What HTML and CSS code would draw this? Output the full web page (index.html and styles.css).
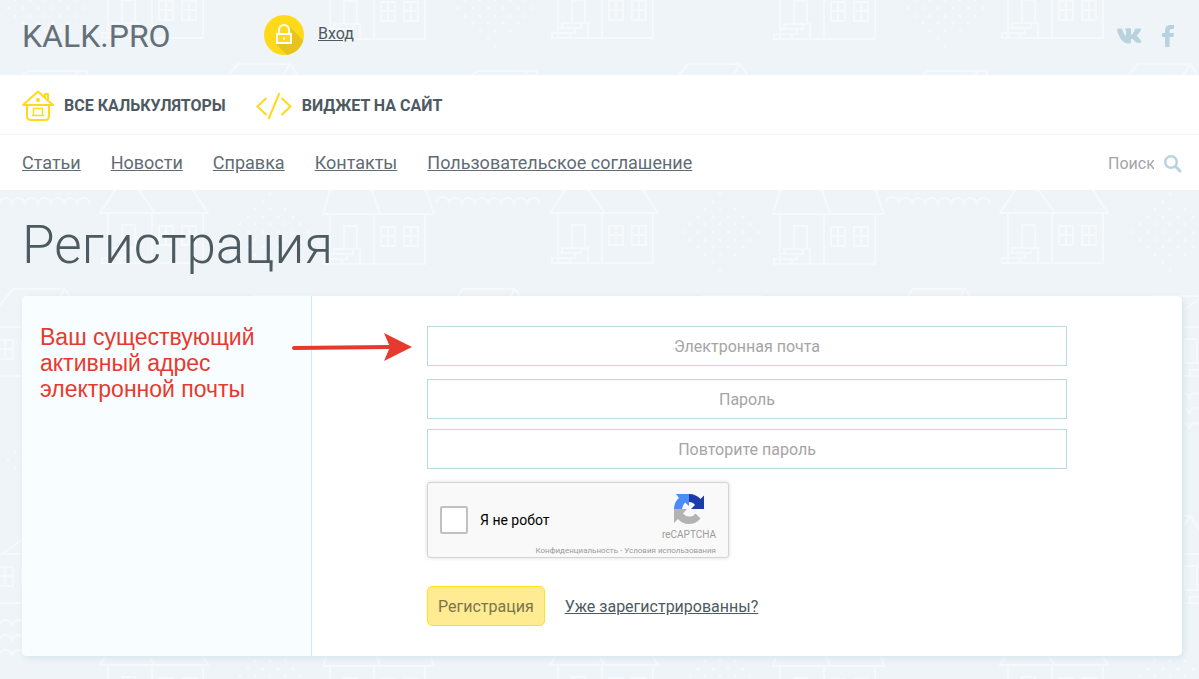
FILE: index.html
```html
<!DOCTYPE html>
<html lang="ru">
<head>
<meta charset="utf-8">
<meta name="viewport" content="width=device-width, initial-scale=1">
<title>Регистрация — KALK.PRO</title>
<link rel="stylesheet" href="styles.css">
</head>
<body>
<svg class="backdrop" aria-hidden="true">
  <defs>
    <g id="windows">
      <path d="M1 1h14v19H1zM8 1v19M1 10h14M24 1h14v19H24zM31 1v19M24 10h14"/>
    </g>
    <g id="stairs">
      <path d="M0 10h18v5H0zM6 5h17v5H6zM10 0h19v5H10zM29 0h7v15H18"/>
    </g>
    <g id="walls">
      <path d="M6 1v49h95V1M50 1v49M20 36V12h13v24M1 50h100"/>
      <use href="#windows" x="56" y="12"/>
      <use href="#stairs" x="0" y="35"/>
    </g>
    <g id="house-a">
      <path d="M-2 0h108l-24-36H22zM22-36h5L53 0"/>
      <use href="#walls"/>
    </g>
    <g id="house-b">
      <path d="M-1 0h111l-7-20q-2-6-8-6H13q-6 0-8 6zM43-26q4 0 7 8l6 18"/>
      <use href="#walls"/>
    </g>
    <g id="scallops">
      <path d="M0 7q1-6 6.500-6t6.500 6q1-6 6.500-6t6.500 6q1-6 6.500-6t6.500 6q1-6 6.500-6t6.500 6q1-6 6.500-6t6.500 6q1-6 6.500-6t6.500 6q1-6 6.500-6t6.500 6q1-6 6.500-6t6.500 6"/>
    </g>
    <g id="dots">
      <path class="dotted" d="M0-38h.1M-7-30h15M-15-23h31M-22-15h46M-30-8h61M-37 0h76M-30 8h61M-22 15h46M-15 23h31M-7 30h15M0 38h.1"/>
    </g>
    <pattern id="village" width="450" height="452" patternUnits="userSpaceOnUse">
      <g class="lines">
        <use href="#house-a" x="102" y="-12"/>
        <use href="#house-b" x="324" y="-11"/>
        <use href="#dots" x="45" y="8"/>
        <use href="#dots" x="45" y="460"/>
        <path d="M206 102l32-38h52l26 38zM266 102l24-38 26 38M220 102v49h102v-49M285 138v-24h12v24M280 138h20v7h-10v6M2 102l20-14M0 102h36M0 151h36M-2 115h15v19H-2M5 115v19M0 124h13M22 115v19M22 75l6-4h59v13M75 75l4-4"/>
        <use href="#scallops" x="-14" y="167"/>
        <use href="#scallops" x="-14" y="182"/>
        <use href="#scallops" x="-14" y="197"/>
        <use href="#scallops" x="436" y="196"/>
        <use href="#house-a" x="102" y="213"/>
        <use href="#house-b" x="324" y="214"/>
        <use href="#dots" x="270" y="232"/>
        <path d="M-18 327l31-38h52l26 38M41 327l24-38M0 327h36M0 376h36M-2 340h15v19H-2M5 340v19M0 349h13M22 340v19M252 296h60M282 311l22-15M270 327h60M285 363v-24h12v24M280 363h20v7h-10v6M276 376h60"/>
        <use href="#scallops" x="276" y="392"/>
        <use href="#scallops" x="276" y="407"/>
        <use href="#scallops" x="276" y="422"/>
      </g>
    </pattern>
  </defs>
  <rect width="100%" height="100%" fill="url(#village)"/>
</svg>

<header class="topbar">
  <a class="logo" href="#">KALK.PRO</a>
  <a class="login" href="#">
    <svg width="40" height="40" viewBox="0 0 40 40" aria-hidden="true">
      <clipPath id="disc"><circle cx="20" cy="20" r="20"/></clipPath>
      <circle cx="20" cy="20" r="20" fill="#ffd91a"/>
      <path clip-path="url(#disc)" d="M25 11l16 16v14H24L12 29l16-9z" fill="#e8c31c"/>
      <path d="M13 19h14v9H13z" fill="#ffd91a" stroke="#fff" stroke-width="2"/>
      <path d="M15 19v-4a5 5 0 0 1 10 0v4" fill="none" stroke="#fff" stroke-width="2"/>
      <path d="M19 22.500h2v2h-2z" fill="#fff"/>
    </svg>
    <span>Вход</span>
  </a>
  <div class="social">
    <a href="#" aria-label="ВКонтакте">
      <svg width="25" height="16" viewBox="0 0 25 16" fill="#b8d2df" aria-hidden="true">
        <path d="M12 15.500C5 15.500 2 9 0 2Q0 .5 1.500.5H4q1 0 1.300 1C6.300 4.500 7.500 7 9 8V3Q8.800 1.500 8 1q.6-.8 2-.8h3q1 0 1 1.300v5.500c2-1.400 3-3.500 4-5.800q.4-.7 1.300-.7H23q1.500 0 .8 1.500c-1 2.300-2.800 4.300-4 5.700 1.500 1.600 3.600 3.500 4.500 5.800q.3 1.200-1 1.200h-3q-1 0-1.600-.8L15.500 11q-1.500-1-1.500.8v2.400q0 1.300-2 1.300z"/>
      </svg>
    </a>
    <a href="#" aria-label="Facebook">
      <svg width="12" height="22" viewBox="0 0 12 22" fill="#b8d2df" aria-hidden="true">
        <path d="M3 22V12H0V8h3V5.500Q3 0 8.500 0H12v4H9.500Q7.500 4 7.500 6v2H12l-.5 4h-4v10z"/>
      </svg>
    </a>
  </div>
</header>

<nav class="products">
  <a href="#">
    <svg width="32" height="32" viewBox="0 0 32 32" fill="none" stroke="#ffd91a" stroke-width="2" stroke-linejoin="round" stroke-linecap="round" aria-hidden="true">
      <path d="M1 15L16 1.500 31 15zM5 16v10q0 4 4 4h14q4 0 4-4V16M23 8V4h3v7"/>
      <path d="M10.500 25.500h11M11.500 25v-6.500h9V25" stroke-width="1.500"/>
      <circle cx="16" cy="10" r="1"/>
    </svg>
    Все калькуляторы
  </a>
  <a href="#">
    <svg width="36" height="28" viewBox="0 0 36 28" fill="none" stroke="#ffd91a" stroke-width="2" aria-hidden="true">
      <path d="M10.500 6L1.500 14.500l9 8.500M25.500 6l9 8.500-9 8.500M23.500 1l-11 26"/>
    </svg>
    Виджет на сайт
  </a>
</nav>

<div class="menu">
  <nav>
    <a href="#">Статьи</a>
    <a href="#">Новости</a>
    <a href="#">Справка</a>
    <a href="#">Контакты</a>
    <a href="#">Пользовательское соглашение</a>
  </nav>
  <form class="search" role="search">
    <input type="text" placeholder="Поиск" aria-label="Поиск">
    <button type="button" aria-label="Найти">
      <svg width="18" height="18" viewBox="0 0 18 18" fill="none" stroke="#b8d2df" aria-hidden="true">
        <circle cx="7" cy="7" r="5.800" stroke-width="2.400"/>
        <path d="M11.500 11.500l4.500 4.500" stroke-width="3" stroke-linecap="round"/>
      </svg>
    </button>
  </form>
</div>

<main>
  <h1>Регистрация</h1>
  <div class="card">
    <aside>
      <p>Ваш существующий активный адрес электронной почты</p>
      <svg class="arrow" width="122" height="30" viewBox="0 0 122 30" aria-hidden="true">
        <path d="M3 16L98 15" stroke="#e63a2e" stroke-width="4" stroke-linecap="round"/>
        <path d="M121 15L93 1l6 14-6 14z" fill="#e63a2e"/>
      </svg>
    </aside>
    <form class="register">
      <input class="field email" type="email" placeholder="Электронная почта" aria-label="Электронная почта">
      <input class="field" type="password" placeholder="Пароль" aria-label="Пароль">
      <input class="field" type="password" placeholder="Повторите пароль" aria-label="Повторите пароль">
      <div class="captcha">
        <label><input type="checkbox">Я не робот</label>
        <div class="brand">
          <svg width="32" height="32" viewBox="0 0 32 32" aria-hidden="true">
            <path d="M16 1c5 0 9 2 11.500 5L31 2.500V16H18l4-4q-2-3-6-3z" fill="#1c3aa9"/>
            <path d="M1 16C1 11 3 7.500 6 5L3 1h13v12l-4-3.500Q9.500 12 9 16z" fill="#4a8df6"/>
            <path d="M1 16h13l-4 4.500q3 3.500 7 3t5.500-3l5 5Q23 31 16 31T5 26l-4 4z" fill="#b3b3b3"/>
          </svg>
          <span>reCAPTCHA</span>
        </div>
        <div class="terms"><a href="#">Конфиденциальность</a> - <a href="#">Условия использования</a></div>
      </div>
      <div class="actions">
        <button type="button">Регистрация</button>
        <a href="#">Уже зарегистрированны?</a>
      </div>
    </form>
  </div>
</main>
</body>
</html>
```
FILE: styles.css
```css
* {
  box-sizing: border-box;
}

body {
  margin: 0;
  min-height: 100vh;
  position: relative;
  background: #eff4f8;
  color: #4d5a61;
  font-family: Roboto, "Liberation Sans", sans-serif;
  font-size: 16px;
}

a {
  color: inherit;
}

svg {
  display: block;
  flex: none;
}

.backdrop {
  position: absolute;
  inset: 0;
  width: 100%;
  height: 100%;
  z-index: -1;
}

.lines {
  fill: none;
  stroke: #f6f9fc;
  stroke-width: 2;
}

.dotted {
  stroke-width: 3;
  stroke-linecap: round;
  stroke-dasharray: 0 15;
}

.topbar {
  display: flex;
  align-items: center;
  height: 75px;
  padding: 0 25px 4px 22px;
}

.logo {
  width: 242px;
  color: #647178;
  font-size: 32px;
  text-decoration: none;
}

.login {
  display: flex;
  align-items: center;
  gap: 14px;
  padding-bottom: 2px;
  text-decoration: none;
}

.login span {
  text-decoration: underline;
  padding-bottom: 2px;
}

.social {
  display: flex;
  align-items: center;
  gap: 20px;
  margin-left: auto;
}

.products {
  display: flex;
  align-items: center;
  gap: 30px;
  height: 60px;
  padding: 2px 22px 0;
  background: #fff;
  border-bottom: 1px solid #f0f2f3;
}

.products a {
  display: flex;
  align-items: center;
  gap: 10px;
  font-weight: 700;
  text-decoration: none;
  text-transform: uppercase;
}

.menu {
  display: flex;
  align-items: center;
  justify-content: space-between;
  height: 55px;
  padding: 0 17px 0 22px;
  background: #fff;
}

.menu nav {
  display: flex;
  gap: 30px;
  color: #5f6c74;
  font-size: 18px;
}

.search {
  display: flex;
  align-items: center;
  gap: 10px;
  padding-top: 2px;
}

.search input {
  width: 46px;
  padding: 0;
  border: 0;
  background: none;
  font: inherit;
}

.search button {
  padding: 0;
  border: 0;
  background: none;
}

input::placeholder {
  color: #a5a5a5;
  opacity: 1;
}

main {
  padding: 20px 17px 23px 22px;
}

h1 {
  margin: 0 0 16px;
  color: #4d5a61;
  font-size: 53px;
  font-weight: 300;
  line-height: 70px;
}

.card {
  display: grid;
  grid-template-columns: 290px 1fr;
  min-height: 360px;
  background: #fff;
  border-radius: 5px;
  box-shadow: 2px 2px 6px #d5e4ea;
}

aside {
  position: relative;
  padding: 28px 18px;
  background: #f8fdff;
  border-right: 1px solid #d0e8f1;
  border-radius: 5px 0 0 5px;
}

aside p {
  width: 230px;
  margin: 0;
  color: #e63a2e;
  font-family: "Liberation Sans", Arial, sans-serif;
  font-size: 23px;
  line-height: 26px;
}

.arrow {
  position: absolute;
  left: 269px;
  top: 36px;
}

.register {
  padding: 30px 115px;
}

.field {
  display: block;
  width: 100%;
  height: 40px;
  margin-bottom: 10px;
  border: 1px solid #b9dae6;
  background: #fff;
  font: inherit;
  text-align: center;
}

.email {
  margin-bottom: 13px;
}

.captcha {
  display: grid;
  grid-template-columns: 1fr auto;
  width: 302px;
  height: 76px;
  margin-top: 13px;
  padding: 10px 12px 0;
  background: #f9f9f9;
  border: 1px solid #d3d3d3;
  border-radius: 3px;
  box-shadow: 0 0 4px #dedede;
}

.captcha label {
  display: flex;
  align-items: center;
  gap: 12px;
  color: #000;
  font-size: 14px;
}

.captcha input {
  appearance: none;
  width: 28px;
  height: 28px;
  margin: 0;
  background: #fff;
  border: 2px solid #c1c1c1;
  border-radius: 2px;
}

.brand {
  display: flex;
  flex-direction: column;
  align-items: center;
  color: #9b9b9b;
  font-size: 10px;
  line-height: 20px;
}

.terms {
  grid-column: 1 / -1;
  color: #9b9b9b;
  font-size: 8px;
  line-height: 10px;
  text-align: right;
}

.terms a {
  text-decoration: none;
}

.actions {
  display: flex;
  align-items: center;
  gap: 20px;
  margin-top: 28px;
}

.actions button {
  height: 40px;
  padding: 0 10px;
  background: #ffeb91;
  border: 1px solid #ffe31a;
  border-radius: 5px;
  color: #7d7450;
  font: inherit;
}
```
